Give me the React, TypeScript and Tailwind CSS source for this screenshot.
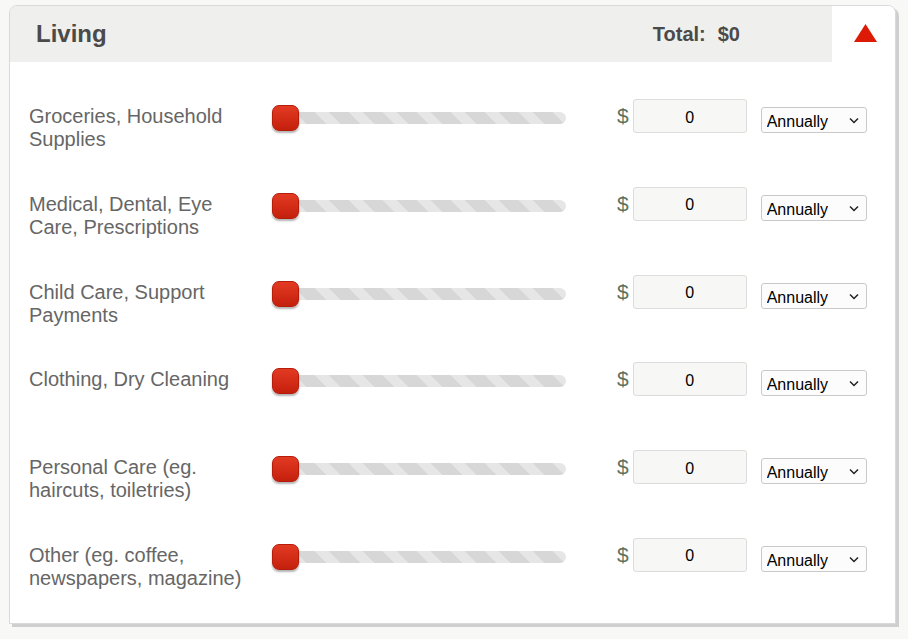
import React from 'react';

const rows = [
  'Groceries, Household Supplies',
  'Medical, Dental, Eye Care, Prescriptions',
  'Child Care, Support Payments',
  'Clothing, Dry Cleaning',
  'Personal Care (eg. haircuts, toiletries)',
  'Other (eg. coffee, newspapers, magazine)',
];

const Slider: React.FC = () => (
  <div className="relative w-[295px] h-[27px] mt-[6px]">
    <div className="absolute left-[2px] right-0 top-[7px] h-[12px] rounded-full bg-[repeating-linear-gradient(45deg,#d7d7d7_0px,#d7d7d7_14px,#e6e6e6_14px,#e6e6e6_24px)]" />
    <div className="absolute left-[1px] top-0 w-[27px] h-[26px] rounded-[7px] bg-gradient-to-b from-[#e33a22] to-[#c41f0c] border border-[#b51c0b] shadow-[0_2px_2px_rgba(0,0,0,0.3)]" />
  </div>
);

const Row: React.FC<{ label: string }> = ({ label }) => (
  <div className="flex items-start h-[87.8px] shrink-0">
    <div className="w-[242px] pr-[12px] mt-[6px] text-[20px] leading-[23px] text-[#666666]">{label}</div>
    <Slider />
    <div className="ml-[51px] mt-[5px] text-[21px] leading-[24px] text-[#5d7360]">$</div>
    <input
      readOnly
      value="0"
      className="ml-[4px] w-[114px] h-[34px] pt-[3px] rounded-[3px] border border-[#dcdcdc] bg-[#f7f7f5] text-center text-[16px] text-black outline-none"
    />
    <div className="relative ml-[14px] mt-[8px]">
      <select className="appearance-none w-[106px] h-[26px] rounded-[3px] border border-[#c9c9c9] bg-[#fcfcfc] pl-[5px] pt-[3px] text-[16px] leading-[22px] text-black outline-none">
        <option>Annually</option>
      </select>
      <svg className="absolute right-[8px] top-[10px] pointer-events-none" width="10" height="7" viewBox="0 0 10 7">
        <path d="M1 1.5 L5 5.5 L9 1.5" fill="none" stroke="#222" strokeWidth="1.5" />
      </svg>
    </div>
  </div>
);

export default function App() {
  return (
    <div className="min-h-[639px] bg-[#f8f8f6] pt-[5px] pl-[9px] font-['Liberation_Sans',Arial,sans-serif]">
      <div className="w-[887px] rounded-t-[8px] border border-[#d9d9d9] bg-white shadow-[3px_3px_0_#cfcfcf] overflow-hidden">
        <div className="flex h-[56px]">
          <div className="flex-1 flex items-center justify-between bg-[#efefed] pl-[26px] pr-[92px]">
            <span className="text-[24px] font-bold text-[#4a4a4a] mt-[-1px]">Living</span>
            <span className="text-[20px] font-bold text-[#4a4a4a] mt-[-1px]">
              Total:<span className="ml-[12px]">$0</span>
            </span>
          </div>
          <div className="w-[63px] flex items-center justify-center bg-white">
            <svg width="23" height="18" viewBox="0 0 23 18" className="ml-[3px] mt-[-3px]">
              <path d="M11.5 0 L23 18 L0 18 Z" fill="#dd1a06" />
            </svg>
          </div>
        </div>
        <div className="h-[561px] pt-[37px] pl-[19px] flex flex-col overflow-hidden">
          {rows.map((r) => (
            <Row key={r} label={r} />
          ))}
        </div>
      </div>
    </div>
  );
}
